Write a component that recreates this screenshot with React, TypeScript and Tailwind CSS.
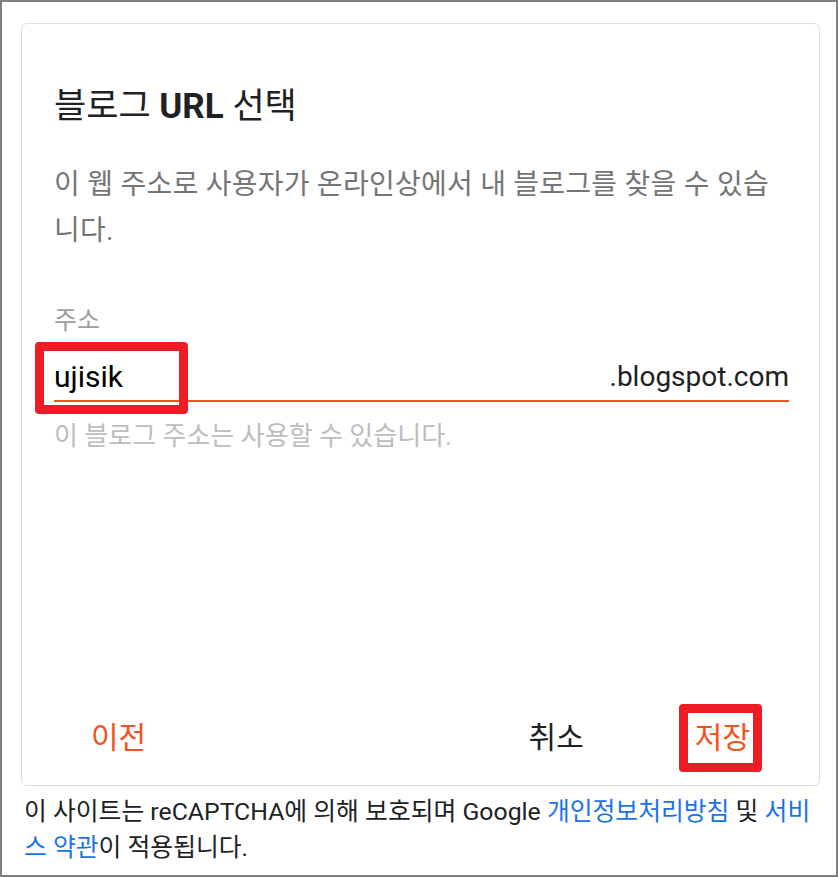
import React from "react";

const font = {
  fontFamily: "Roboto, 'Noto Sans CJK KR', sans-serif",
};

const App = () => {
  return (
    <div
      className="flex h-[877px] w-[838px] flex-col border-2 border-[#808080] bg-white"
      style={font}
    >
      {/* dialog card */}
      <div className="ml-[19px] mt-[21px] flex h-[763px] w-[799px] flex-col rounded-[6px] border border-[#dadce0] pl-[32px] pr-[30px]">
        <h1 className="mt-[61px] text-[35px] leading-[44px] font-normal text-[#202124]">
          블로그 <span className="font-bold">URL</span> 선택
        </h1>
        <p className="mt-[33px] text-[28px] leading-[46px] tracking-[0.25px] text-[#757575]">
          이 웹 주소로 사용자가 온라인상에서 내 블로그를 찾을 수 있습니다.
        </p>

        <label className="mt-[51px] text-[25px] leading-[32px] text-[#9e9e9e]">
          주소
        </label>
        <div className="relative mt-[23px] flex items-end justify-between border-b-2 border-[#f4511e] pb-[6px]">
          <span className="text-[30px] leading-[34px] text-black">ujisik</span>
          <span className="text-[28px] leading-[34px] text-[#202124]">
            .blogspot.com
          </span>
          <div className="absolute left-[-19px] top-[-18px] h-[72px] w-[153px] rounded-[4px] border-[9px] border-[#ee1c25]" />
        </div>
        <p className="mt-[17px] text-[26px] leading-[34px] text-[#bdbdbd]">
          이 블로그 주소는 사용할 수 있습니다.
        </p>

        <div className="mt-auto mb-[13px] flex items-center">
          <button className="ml-[37px] text-[30px] leading-[36px] text-[#f4511e]">
            이전
          </button>
          <button className="ml-auto mr-[95px] text-[30px] leading-[36px] text-[#202124]">
            취소
          </button>
          <div className="mr-[27px] rounded-[4px] border-[9px] border-[#ee1c25] pl-[7px] pr-[3px] py-[7px]">
            <span className="text-[30px] leading-[36px] text-[#f4511e]">
              저장
            </span>
          </div>
        </div>
      </div>

      <p className="ml-[22px] mr-[16px] mt-[8px] text-[24.8px] leading-[36px] text-[#202124]">
        이 사이트는 reCAPTCHA에 의해 보호되며 Google{" "}
        <a className="text-[#1a73e8]">개인정보처리방침</a> 및{" "}
        <a className="text-[#1a73e8]">서비스 약관</a>이 적용됩니다.
      </p>
    </div>
  );
};

export default App;
